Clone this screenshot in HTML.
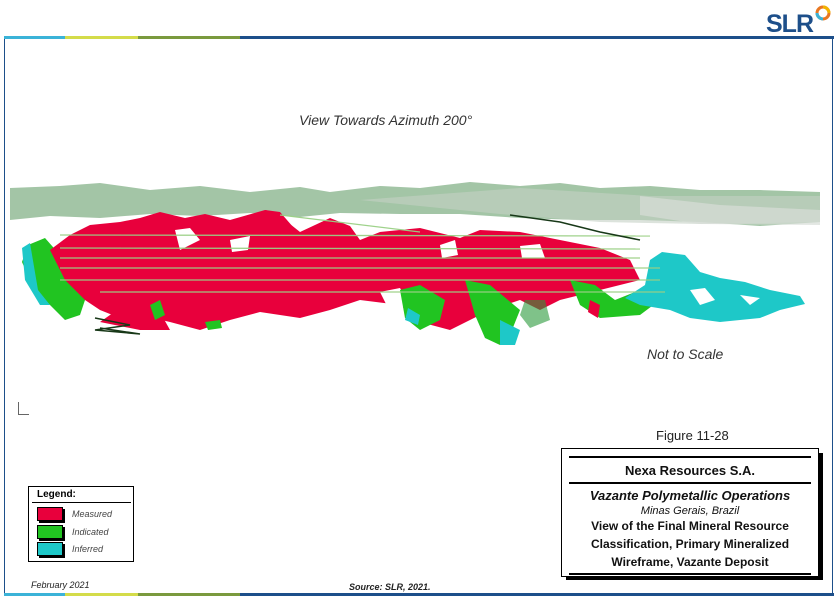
<!DOCTYPE html>
<html><head><style>
body{margin:0;width:840px;height:600px;background:#fff;position:relative;overflow:hidden;font-family:"Liberation Sans",sans-serif}
.a{position:absolute}
</style></head><body>
<div class="a" style="left:4px;top:36px;width:61px;height:3px;background:#3bb3d8"></div>
<div class="a" style="left:65px;top:36px;width:73px;height:3px;background:#d4dc4a"></div>
<div class="a" style="left:138px;top:36px;width:102px;height:3px;background:#7a9a3e"></div>
<div class="a" style="left:240px;top:36px;width:594px;height:3px;background:#1d4f8a"></div>
<div class="a" style="left:4px;top:39px;width:1px;height:555px;background:#1d4f8a"></div>
<div class="a" style="left:832px;top:39px;width:1px;height:555px;background:#1d4f8a"></div>
<div class="a" style="left:4px;top:593px;width:61px;height:3px;background:#3bb3d8"></div>
<div class="a" style="left:65px;top:593px;width:73px;height:3px;background:#d4dc4a"></div>
<div class="a" style="left:138px;top:593px;width:102px;height:3px;background:#7a9a3e"></div>
<div class="a" style="left:240px;top:593px;width:594px;height:3px;background:#1d4f8a"></div>
<div class="a" style="left:766px;top:10px;font-size:25px;font-weight:bold;color:#1d4f8a;letter-spacing:-1px">SLR</div>
<svg class="a" style="left:814px;top:4px" width="18" height="18"><circle cx="9" cy="9" r="6" fill="none" stroke="#e87722" stroke-width="3"/><path d="M9 3 A6 6 0 0 1 15 9" stroke="#f2b300" stroke-width="3" fill="none"/><path d="M3 9 A6 6 0 0 0 9 15" stroke="#3bb3d8" stroke-width="3" fill="none"/></svg>
<div class="a" style="left:299px;top:112px;font-size:14px;font-style:italic;color:#333">View Towards Azimuth 200°</div>
<svg class="a" style="left:0;top:0" width="840" height="600">
<path d="M10 188 L60 186 L100 183 L150 190 L200 186 L250 192 L300 187 L330 192 L380 186 L420 188 L470 182 L520 186 L560 183 L600 188 L650 186 L700 190 L760 190 L820 192 L820 222 L760 226 L700 222 L640 220 L580 220 L520 218 L460 214 L400 214 L340 213 L300 217 L250 213 L200 216 L150 214 L100 218 L50 216 L10 220Z" fill="#93bb97" opacity="0.85"/>
<path d="M360 200 L520 188 L650 196 L820 196 L820 222 L700 224 L600 222 L500 214Z" fill="#c4d0c4" opacity="0.6"/>
<path d="M640 196 L720 205 L820 210 L820 225 L700 224 L640 215Z" fill="#d7ddd7" opacity="0.7"/>
<!-- left green/cyan -->
<path d="M28 245 L45 238 L60 255 L75 275 L85 300 L80 315 L65 320 L45 300 L30 280 L22 262Z" fill="#21c421"/>
<path d="M22 248 L30 243 L38 290 L50 305 L40 305 L25 280Z" fill="#1ec8c8"/>
<!-- red mass -->
<path d="M50 250 L70 235 L90 225 L120 222 L140 218 L160 212 L185 218 L205 214 L230 220 L265 210 L275 212 L300 232 L330 218 L350 226 L360 240 L380 232 L420 228 L460 238 L480 230 L520 232 L560 240 L600 248 L630 260 L640 280 L600 290 L560 300 L540 310 L520 300 L490 310 L470 320 L450 330 L420 322 L400 305 L360 300 L330 310 L300 318 L260 312 L230 320 L200 330 L170 322 L140 315 L120 318 L100 310 L85 300 L65 280Z" fill="#e8003c"/>
<path d="M265 210 L280 212 L300 235 L315 260 L290 262 L270 240Z" fill="#e8003c"/>
<path d="M175 230 L190 228 L200 240 L180 250Z" fill="#fff"/>
<path d="M230 240 L250 236 L248 250 L232 252Z" fill="#fff"/>
<path d="M440 245 L455 240 L458 255 L442 258Z" fill="#fff"/>
<path d="M520 246 L540 244 L545 258 L522 258Z" fill="#fff"/>
<path d="M380 292 L400 288 L410 305 L390 312Z" fill="#fff"/>
<path d="M120 308 L160 312 L170 330 L140 330 L100 322Z" fill="#e8003c"/>
<!-- greens in lower middle -->
<path d="M400 290 L420 285 L445 300 L440 320 L420 330 L405 318Z" fill="#21c421"/>
<path d="M465 280 L490 285 L520 310 L512 330 L500 345 L485 338 L475 315Z" fill="#21c421"/>
<path d="M500 320 L520 330 L515 345 L500 345Z" fill="#1ec8c8"/>
<path d="M408 308 L420 315 L418 325 L405 320Z" fill="#1ec8c8"/>
<path d="M525 300 L545 300 L550 320 L530 328 L520 315Z" fill="#2a9a3a" opacity="0.6"/>
<path d="M570 280 L595 285 L615 300 L640 290 L660 285 L660 300 L640 315 L600 318 L580 305Z" fill="#21c421"/>
<path d="M590 300 L600 305 L598 318 L588 312Z" fill="#e8003c"/>
<path d="M205 322 L220 320 L222 328 L208 330Z" fill="#21c421"/>
<path d="M150 305 L160 300 L165 315 L155 320Z" fill="#21c421"/>
<!-- cyan right -->
<path d="M650 260 L662 252 L685 255 L700 272 L720 278 L745 282 L770 290 L800 296 L805 304 L780 310 L760 318 L720 322 L690 318 L670 310 L640 305 L625 298 L645 285 L648 270Z" fill="#1ec8c8"/>
<path d="M690 290 L705 288 L715 300 L700 305Z" fill="#fff"/>
<path d="M740 295 L760 298 L750 305Z" fill="#fff"/>
<g stroke="#9ad085" stroke-width="1.3" opacity="0.95"><line x1="60" y1="235" x2="650" y2="236"/><line x1="60" y1="248" x2="640" y2="249"/><line x1="60" y1="258" x2="640" y2="258"/><line x1="60" y1="268" x2="660" y2="268"/><line x1="60" y1="280" x2="660" y2="280"/><line x1="100" y1="292" x2="665" y2="292"/><line x1="280" y1="215" x2="420" y2="232"/></g>
<g stroke="#183818" stroke-width="1.5" fill="none"><path d="M95 318 L130 325 L95 330 L140 334 L100 328"/><path d="M510 215 L560 222 L600 232 L640 240"/></g>
</svg>
<div class="a" style="left:647px;top:346px;font-size:14px;font-style:italic;color:#333">Not to Scale</div>
<div class="a" style="left:18px;top:402px;width:10px;height:12px;border-left:1px solid #666;border-bottom:1px solid #666"></div>
<div class="a" style="left:656px;top:428px;font-size:13px;color:#222">Figure 11-28</div>
<div class="a" style="left:566px;top:453px;width:257px;height:127px;background:#000"></div>
<div class="a" style="left:561px;top:448px;width:256px;height:127px;background:#fff;border:1px solid #000;text-align:center;color:#111">
<div style="margin:7px 7px 0;border-top:2px solid #000"></div>
<div style="font-size:13px;font-weight:bold;padding:5px 0 4px">Nexa Resources S.A.</div>
<div style="margin:0 7px;border-top:2px solid #000"></div>
<div style="font-size:13px;font-weight:bold;font-style:italic;margin-top:4px">Vazante Polymetallic Operations</div>
<div style="font-size:11px;font-style:italic;margin-top:2px">Minas Gerais, Brazil</div>
<div style="font-size:12px;font-weight:bold;line-height:18px">View of the Final Mineral Resource<br>Classification, Primary Mineralized<br>Wireframe, Vazante Deposit</div>
<div style="margin:2px 7px 0;border-top:2px solid #000"></div>
</div>
<div class="a" style="left:28px;top:486px;width:104px;height:74px;border:1px solid #000;background:#fff;font-size:10px">
<div style="font-weight:bold;margin:2px 0 0 8px">Legend:</div>
<div style="border-top:1px solid #000;margin:2px 2px 0 3px"></div>
<div style="position:absolute;left:8px;top:20px;width:24px;height:12px;background:#e8003c;border:1px solid #000;box-shadow:2px 2px #000"></div>
<div style="position:absolute;left:8px;top:38px;width:24px;height:12px;background:#21c421;border:1px solid #000;box-shadow:2px 2px #000"></div>
<div style="position:absolute;left:8px;top:55px;width:24px;height:12px;background:#1ec8c8;border:1px solid #000;box-shadow:2px 2px #000"></div>
<div style="position:absolute;left:43px;top:22px;font-style:italic;color:#444;font-size:9px">Measured</div>
<div style="position:absolute;left:43px;top:40px;font-style:italic;color:#444;font-size:9px">Indicated</div>
<div style="position:absolute;left:43px;top:57px;font-style:italic;color:#444;font-size:9px">Inferred</div>
</div>
<div class="a" style="left:31px;top:580px;font-size:9px;font-style:italic;color:#222">February 2021</div>
<div class="a" style="left:349px;top:582px;font-size:9px;font-weight:bold;font-style:italic;color:#222">Source: SLR, 2021.</div>
</body></html>
